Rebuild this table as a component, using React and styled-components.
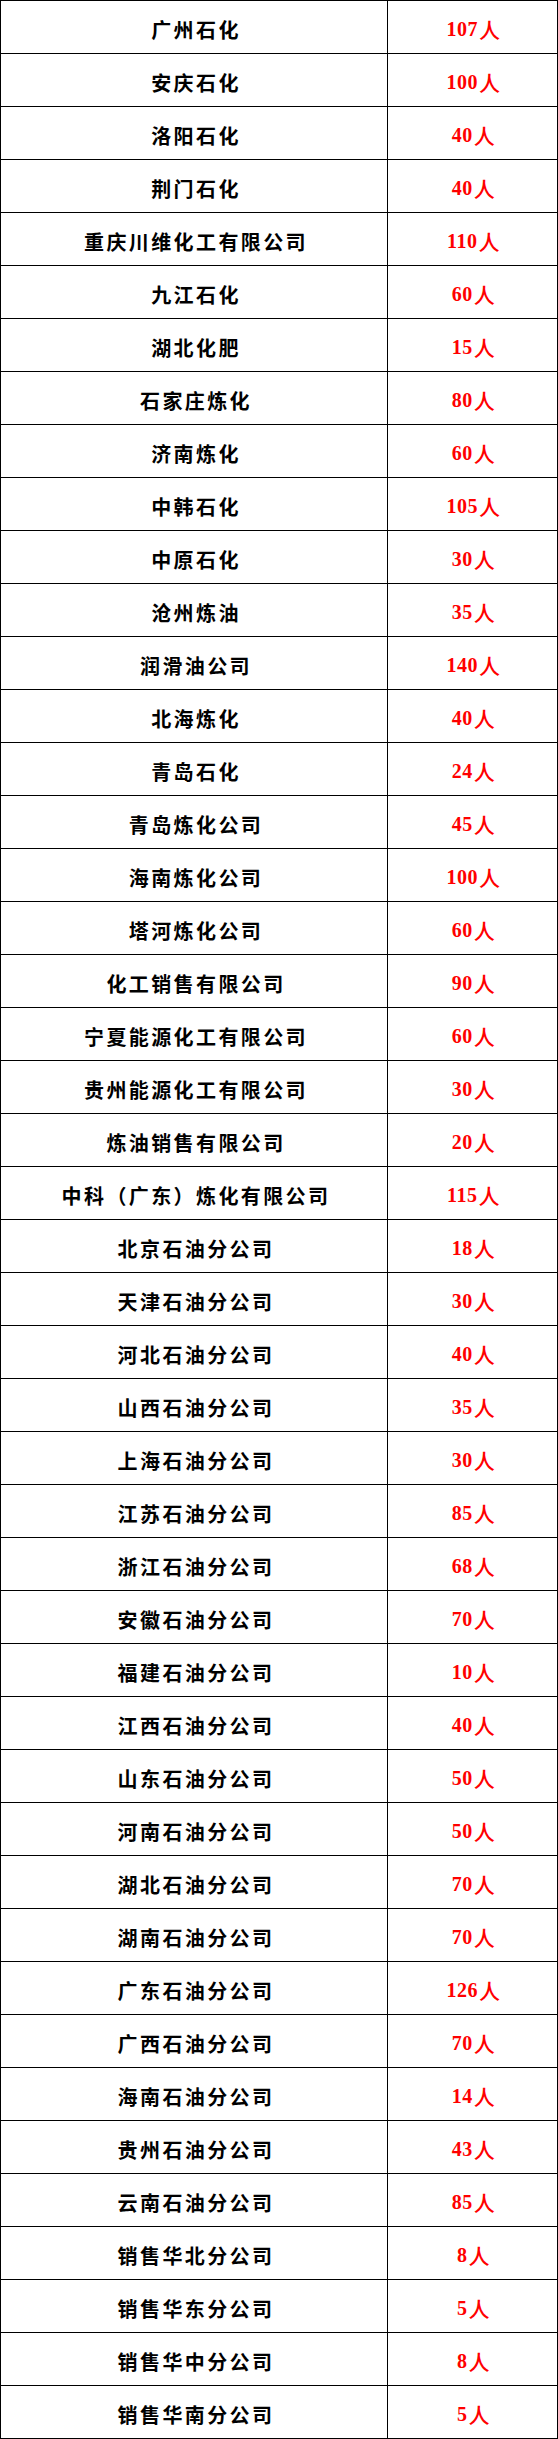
import React from "react";
import styled, { createGlobalStyle } from "styled-components";

const GlobalStyle = createGlobalStyle`
  html, body {
    margin: 0;
    padding: 0;
    background: #ffffff;
  }
`;

// Table frame: top and left border, cells draw right and bottom
const Sheet = styled.div`
  width: 558px;
  box-sizing: border-box;
  border-top: 1px solid #000;
  border-left: 1px solid #000;
  background: #fff;
`;

const Row = styled.div`
  display: grid;
  grid-template-columns: 387px 170px;
  height: 53px;
`;

const Cell = styled.div`
  box-sizing: border-box;
  border-right: 1px solid #000;
  border-bottom: 1px solid #000;
  display: flex;
  align-items: center;
  justify-content: center;
  padding-top: 4px;
  font-weight: 700;
  font-size: 20px;
  white-space: nowrap;
`;

const NameCell = styled(Cell)`
  color: #000;
  font-family: "Noto Sans CJK SC", "Noto Sans", sans-serif;
  letter-spacing: 2.4px;
  padding-left: 4px;
`;

const CountCell = styled(Cell)`
  color: #ff0000;
  font-family: "Liberation Serif", "Noto Sans CJK SC", serif;
  letter-spacing: 0.5px;
  padding-left: 2px;
`;

const Unit = styled.span`
  font-family: "Noto Sans CJK SC", sans-serif;
  font-weight: 500;
  font-size: 21px;
  margin-left: 1px;
`;

const rows = [
  ["广州石化", 107],
  ["安庆石化", 100],
  ["洛阳石化", 40],
  ["荆门石化", 40],
  ["重庆川维化工有限公司", 110],
  ["九江石化", 60],
  ["湖北化肥", 15],
  ["石家庄炼化", 80],
  ["济南炼化", 60],
  ["中韩石化", 105],
  ["中原石化", 30],
  ["沧州炼油", 35],
  ["润滑油公司", 140],
  ["北海炼化", 40],
  ["青岛石化", 24],
  ["青岛炼化公司", 45],
  ["海南炼化公司", 100],
  ["塔河炼化公司", 60],
  ["化工销售有限公司", 90],
  ["宁夏能源化工有限公司", 60],
  ["贵州能源化工有限公司", 30],
  ["炼油销售有限公司", 20],
  ["中科（广东）炼化有限公司", 115],
  ["北京石油分公司", 18],
  ["天津石油分公司", 30],
  ["河北石油分公司", 40],
  ["山西石油分公司", 35],
  ["上海石油分公司", 30],
  ["江苏石油分公司", 85],
  ["浙江石油分公司", 68],
  ["安徽石油分公司", 70],
  ["福建石油分公司", 10],
  ["江西石油分公司", 40],
  ["山东石油分公司", 50],
  ["河南石油分公司", 50],
  ["湖北石油分公司", 70],
  ["湖南石油分公司", 70],
  ["广东石油分公司", 126],
  ["广西石油分公司", 70],
  ["海南石油分公司", 14],
  ["贵州石油分公司", 43],
  ["云南石油分公司", 85],
  ["销售华北分公司", 8],
  ["销售华东分公司", 5],
  ["销售华中分公司", 8],
  ["销售华南分公司", 5],
];

export default function App() {
  return (
    <>
      <GlobalStyle />
      <Sheet>
        {rows.map(([name, count]) => (
          <Row key={name}>
            <NameCell>{name}</NameCell>
            <CountCell>
              {count}
              <Unit>人</Unit>
            </CountCell>
          </Row>
        ))}
      </Sheet>
    </>
  );
}
